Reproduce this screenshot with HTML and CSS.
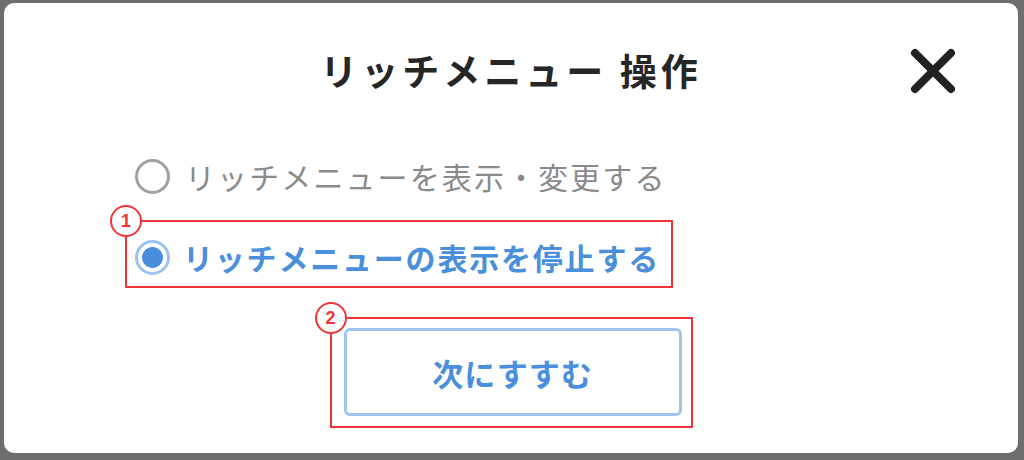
FILE: index.html
```html
<!DOCTYPE html>
<html lang="ja">
<head>
<meta charset="utf-8">
<link rel="stylesheet" href="styles.css">
</head>
<body>
<div class="frame">
  <div class="dialog">
    <div class="header">
      <h1 class="title">リッチメニュー 操作</h1>
      <button class="close" aria-label="閉じる">
        <svg width="48" height="48" viewBox="0 0 48 48"><path d="M6 6 L42 42 M42 6 L6 42" stroke="#222" stroke-width="8" stroke-linecap="round"/></svg>
      </button>
    </div>
    <div class="options">
      <label class="option first">
        <span class="radio"></span>
        <span class="label-text">リッチメニューを表示・変更する</span>
      </label>
      <div class="mark mark-1">
        <span class="badge">1</span>
        <label class="option selected">
          <span class="radio checked"></span>
          <span class="label-text">リッチメニューの表示を停止する</span>
        </label>
      </div>
    </div>
    <div class="actions">
      <div class="mark mark-2">
        <span class="badge">2</span>
        <button class="next">次にすすむ</button>
      </div>
    </div>
  </div>
</div>
</body>
</html>
```

FILE: styles.css
```css
* { box-sizing: border-box; }
html, body { margin: 0; padding: 0; }
body {
  width: 1024px;
  height: 460px;
  background: #6e6e6e;
  font-family: "Noto Sans CJK JP", "Noto Sans", sans-serif;
  overflow: hidden;
}
.frame {
  padding: 3px 6px 7px 4px;
  height: 460px;
}
.dialog {
  background: #fff;
  border-radius: 10px;
  height: 100%;
  display: flex;
  flex-direction: column;
  position: relative;
}
.header {
  height: 140px;
  display: flex;
  justify-content: center;
  align-items: flex-start;
  position: relative;
}
.title {
  margin: 41px 0 0;
  font-size: 37px;
  font-weight: 700;
  color: #262626;
  letter-spacing: 4px;
  line-height: 52px;
}
.close {
  position: absolute;
  right: 61px;
  top: 44px;
  width: 48px;
  height: 48px;
  padding: 0;
  border: 0;
  background: none;
}
.close svg { display: block; }
.options {
  padding-left: 121px;
  display: flex;
  flex-direction: column;
}
.option {
  display: flex;
  align-items: center;
  gap: 15px;
  height: 66px;
  color: #8a8a8a;
  font-size: 30px;
  letter-spacing: 2.1px;
}
.option.first { padding-left: 10px; }
.mark {
  position: relative;
  border: 2px solid #f0353a;
  align-self: flex-start;
}
.mark-1 {
  width: 548px;
  height: 68px;
  margin-top: 11px;
}
.mark-1 .option {
  height: 64px;
  padding-left: 8px;
  padding-top: 6px;
  gap: 13px;
  letter-spacing: 1.8px;
}
.badge {
  position: absolute;
  left: -17px;
  top: -17px;
  width: 32px;
  height: 32px;
  border: 2px solid #f0353a;
  border-radius: 50%;
  background: #fff;
  color: #f0353a;
  font-family: "Liberation Sans", sans-serif;
  font-weight: 700;
  font-size: 18px;
  display: flex;
  align-items: center;
  justify-content: center;
}
.radio {
  width: 35px;
  height: 35px;
  border: 3px solid #a0a0a0;
  border-radius: 50%;
  flex: none;
}
.radio.checked {
  border: 3px solid #9cc2ee;
  background: radial-gradient(circle, #4a8fdb 0 10px, #fff 10.8px);
}
.selected {
  color: #4a8fdb;
  font-weight: 700;
}
.actions {
  display: flex;
  justify-content: center;
  margin-top: 29px;
}
.mark-2 {
  width: 363px;
  height: 111px;
  padding: 9px 9px 10px 12px;
}
.next {
  width: 100%;
  height: 100%;
  background: #fff;
  border: 3px solid #9fc4ee;
  border-radius: 6px;
  color: #4a8fdb;
  font-family: inherit;
  font-weight: 700;
  font-size: 31px;
  letter-spacing: 1px;
}
```
